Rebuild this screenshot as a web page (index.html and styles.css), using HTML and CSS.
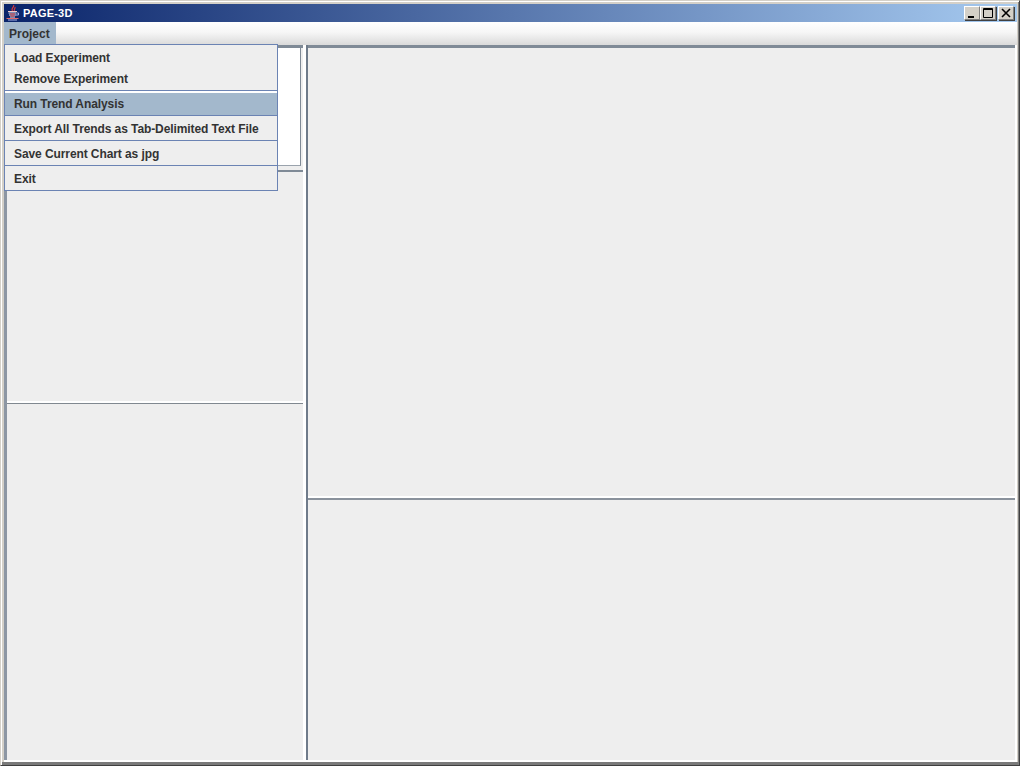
FILE: index.html
```html
<!DOCTYPE html>
<html lang="en">
<head>
<meta charset="utf-8">
<title>PAGE-3D</title>
<link rel="stylesheet" href="styles.css">
</head>
<body>
<div class="window">
  <header class="titlebar">
    <svg class="app-icon" width="16" height="16" viewBox="0 0 16 16" fill="none">
      <path d="M8.500 0c1.500 2-3 3-1 6M10 2c.5 2-1.500 2-.5 4" stroke="#e0393b" stroke-width="1.100"/>
      <path d="M3 6.500h9" stroke="#f0c8c8" stroke-width="1"/>
      <path d="M3.500 8h8M4 10h7M5 12h5" stroke="#eef0fb" stroke-width="1"/>
      <path d="M5 9h5M5.500 11h4" stroke="#d8383a" stroke-width="1"/>
      <path d="M12 8h1.500v2H11" stroke="#aab4ea" stroke-width="1"/>
      <path d="M1.500 13.500h12" stroke="#e46a6a" stroke-width="1"/>
      <path d="M3 15h9" stroke="#aab4ea" stroke-width="1"/>
    </svg>
    <span class="title-text">PAGE-3D</span>
    <div class="controls">
      <span class="ctl"><svg width="14" height="12" viewBox="0 0 14 12"><path d="M3 9h6v2H3z" fill="#000"/></svg></span>
      <span class="ctl"><svg width="14" height="12" viewBox="0 0 14 12" fill="none"><path d="M2.500 1.500h9v9h-9z" stroke="#000"/><path d="M2 2.500h10" stroke="#000"/></svg></span>
      <span class="ctl ctl-close"><svg width="14" height="12" viewBox="0 0 14 12" fill="none"><path d="M3 2l8 8M11 2l-8 8" stroke="#000" stroke-width="1.600"/></svg></span>
    </div>
  </header>
  <nav class="menubar"><span class="menu-title">Project</span></nav>
  <main class="panes">
    <section class="col-left">
      <div class="pane pane-list"><div class="list"></div></div>
      <div class="pane pane-mid"></div>
      <div class="pane pane-low"></div>
    </section>
    <section class="col-right">
      <div class="pane pane-chart"></div>
      <div class="pane pane-table"></div>
    </section>
  </main>
  <div class="menu">
    <div class="menu-item menu-item-load">Load Experiment</div>
    <div class="menu-item menu-item-remove">Remove Experiment</div>
    <div class="sep sep-wide"></div>
    <div class="menu-item menu-item-active">Run Trend Analysis</div>
    <div class="sep"></div>
    <div class="menu-item">Export All Trends as Tab-Delimited Text File</div>
    <div class="sep"></div>
    <div class="menu-item">Save Current Chart as jpg</div>
    <div class="sep"></div>
    <div class="menu-item">Exit</div>
  </div>
</div>
</body>
</html>
```
FILE: styles.css
```css
* { box-sizing: border-box; }
html, body { margin: 0; padding: 0; background: #d4d0c8; }
body { width: 1020px; height: 766px; overflow: hidden; font: bold 12px "Liberation Sans", Arial, sans-serif; color: #333; }
.window {
  position: relative;
  width: 1020px;
  height: 766px;
  display: flex;
  flex-direction: column;
  background: #d4d0c8;
  border: 1px solid #404040;
  border-top-color: #d4d0c8;
  border-left-color: #d4d0c8;
  box-shadow: inset 1px 1px 0 #fff, inset -1px 0 0 #808080, inset 0 -3px 0 #7a7a7a;
  padding: 3px 2px 3px 3px;
}
.titlebar {
  flex: none;
  height: 18px;
  display: flex;
  align-items: center;
  gap: 2px;
  padding: 0 3px 0 1px;
  background: linear-gradient(90deg, #0a246a 0%, #a6caf0 100%);
  color: #fff;
  font-size: 11px;
}
.app-icon { flex: none; }
.title-text { letter-spacing: 0.020em; }
.controls { margin-left: auto; display: flex; gap: 0; }
.ctl {
  width: 16px;
  height: 14px;
  display: flex;
  align-items: center;
  justify-content: center;
  background: #d4d0c8;
  border: 1px solid #808080;
  border-top-color: #fff;
  border-left-color: #fff;
  box-shadow: 1px 1px 0 #404040;
}
.ctl-close { margin-left: 2px; }
.menubar {
  flex: none;
  height: 23px;
  display: flex;
  align-items: stretch;
  background: linear-gradient(180deg, #fff 0%, #f6f6f6 45%, #dadada 100%);
}
.menu-title {
  width: 52px;
  display: flex;
  align-items: center;
  padding-left: 5px;
  background: #a3b8cc;
}
.panes { flex: 1; min-height: 0; display: flex; gap: 3px; padding: 0 2px 2px 0; background: #fff; }
.col-left { width: 299px; flex: none; display: flex; flex-direction: column; border-left: 3px solid #8c96a3; }
.col-right { flex: 1; display: flex; flex-direction: column; border-left: 2px solid #6f7b8a; }
.pane { background: #eee; }
.pane-list { height: 125px; flex: none; padding-right: 2px; border-top: 3px solid #7f8a96; padding-bottom: 4px; }
.list { height: 100%; background: #fff; border-right: 1px solid #7f8a96; border-bottom: 1px solid #9aa3ad; }
.pane-mid { height: 233px; flex: none; border-top: 2px solid #7f8a96; border-bottom: 2px solid #fff; }
.pane-low { flex: 1; border-top: 1px solid #808890; }
.pane-chart { height: 453px; flex: none; border-top: 3px solid #7f8a96; border-bottom: 2px solid #fff; }
.pane-table { flex: 1; border-top: 2px solid #8a929c; }
.menu {
  position: absolute;
  left: 3px;
  top: 43px;
  width: 274px;
  display: flex;
  flex-direction: column;
  background: #eee;
  border: 1px solid #6b83b3;
  padding-top: 1px;
  letter-spacing: -0.090px;
}
.menu-item { height: 24px; display: flex; align-items: center; padding: 2px 0 0 9px; }
.menu-item-load { height: 22px; }
.menu-item-remove { height: 22px; padding-top: 0; }
.menu-item-active { height: 22px; padding-top: 0; background: #a3b8cc; }
.sep { height: 1px; flex: none; background: #6b83b3; }
.sep-wide { height: 3px; background: linear-gradient(180deg, #6b83b3 33%, #fff 33%); }
```
